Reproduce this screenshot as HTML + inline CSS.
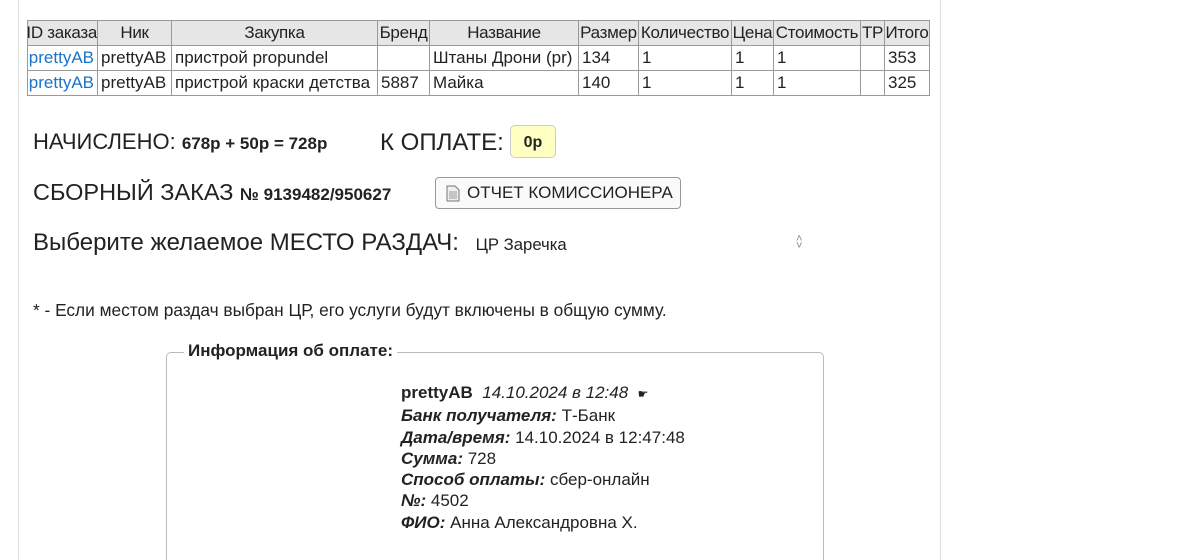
<!DOCTYPE html>
<html style="height:560px;overflow:hidden"><head><meta charset="utf-8"><style>
body{margin:0;width:1179px;height:560px;background:#fff;font-family:"Liberation Sans",Arial,sans-serif;color:#222;position:relative;overflow:hidden}
.lb{position:absolute;left:18px;top:0;width:1px;height:560px;background:#ddd}
.rb{position:absolute;left:940px;top:0;width:1px;height:560px;background:#ddd}
table{position:absolute;left:27px;top:20px;width:902px;border-collapse:collapse;font-size:17px;table-layout:fixed}
td,th{border:1px solid #999;padding:0 3px;height:24px;white-space:nowrap;overflow:hidden;font-weight:normal;text-align:left}
th{background:#e6e6e6;text-align:center;padding:0;letter-spacing:-0.3px}
.r{display:flex;justify-content:flex-end;overflow:hidden;width:100%}
.r>*{flex-shrink:0}
a{color:#1a73c8;text-decoration:none}
.t{position:absolute;white-space:nowrap}
.big{font-size:23.5px;color:#222}
.b{font-weight:bold;font-size:17px}
.pay{position:absolute;left:510px;top:125px;width:46px;height:33px;background:#ffffc4;border:1px solid #ccc;border-radius:5px;box-sizing:border-box;font-weight:bold;font-size:16px;text-align:center;line-height:33px}
.btn{position:absolute;left:435px;top:177px;width:246px;height:32px;border:1px solid #999;border-radius:4px;box-sizing:border-box;font-size:17px;line-height:30px;padding-left:31px;background:#fafafa;white-space:nowrap}
.fs{position:absolute;left:166px;top:352px;width:658px;height:208px;border:1px solid #bbb;border-bottom:none;border-radius:5px 5px 0 0;box-sizing:border-box}
.lg{position:absolute;left:184px;top:341px;background:#fff;padding:0 4px;font-weight:bold;font-size:17px}
.info{position:absolute;left:401px;top:382px;font-size:17px;line-height:21.3px}
.info i{font-weight:bold}
</style></head><body>
<div class="lb"></div><div class="rb"></div>
<table>
<colgroup><col style="width:70px"><col style="width:74px"><col style="width:206px"><col style="width:52px"><col style="width:149px"><col style="width:60px"><col style="width:93px"><col style="width:42px"><col style="width:87px"><col style="width:24px"><col style="width:45px"></colgroup>
<tr><th><div class="r"><span>ID заказа</span></div></th><th>Ник</th><th>Закупка</th><th>Бренд</th><th>Название</th><th>Размер</th><th>Количество</th><th>Цена</th><th>Стоимость</th><th>ТР</th><th>Итого</th></tr>
<tr><td style="padding:0 3px 0 0"><div class="r"><a>prettyAB</a></div></td><td>prettyAB</td><td>пристрой propundel</td><td></td><td>Штаны Дрони (pr)</td><td>134</td><td>1</td><td>1</td><td>1</td><td></td><td>353</td></tr>
<tr><td style="padding:0 3px 0 0"><div class="r"><a>prettyAB</a></div></td><td>prettyAB</td><td>пристрой краски детства</td><td>5887</td><td>Майка</td><td>140</td><td>1</td><td>1</td><td>1</td><td></td><td>325</td></tr>
</table>
<div class="t big" style="left:33px;top:129px;font-size:22px">НАЧИСЛЕНО: <span class="b">678р + 50р = 728р</span></div>
<div class="t big" style="left:380px;top:129px;font-size:24px">К ОПЛАТЕ:</div>
<div class="pay">0р</div>
<div class="t big" style="left:33px;top:179px">СБОРНЫЙ ЗАКАЗ <span class="b">№ 9139482/950627</span></div>
<div class="btn"><svg style="position:absolute;left:10px;top:7px" width="14" height="17" viewBox="0 0 14 17"><path d="M1 1h8l4 4v11H1z" fill="#eee" stroke="#777"/><path d="M3 7h8M3 9h8M3 11h8M3 13h8" stroke="#999"/></svg>ОТЧЕТ КОМИССИОНЕРА</div>
<div class="t big" style="left:33px;top:229px;font-size:24px">Выберите желаемое МЕСТО РАЗДАЧ: <span style="font-size:16.7px;margin-left:10px">ЦР Заречка</span></div>
<div class="t" style="left:796px;top:236px;font-size:11px;color:#888;line-height:7px">˄<br>˅</div>
<div class="t" style="left:33px;top:300px;font-size:17.3px">* - Если местом раздач выбран ЦР, его услуги будут включены в общую сумму.</div>
<div class="fs"></div>
<div class="lg">Информация об оплате:</div>
<div class="info">
<b>prettyAB</b> &nbsp;<i style="font-weight:normal">14.10.2024 в 12:48</i> &nbsp;<span style="font-size:12px">☛</span><br>
<i>Банк получателя:</i> Т-Банк<br>
<i>Дата/время:</i> 14.10.2024 в 12:47:48<br>
<i>Сумма:</i> 728<br>
<i>Способ оплаты:</i> сбер-онлайн<br>
<i>№:</i> 4502<br>
<i>ФИО:</i> Анна Александровна Х.
</div>
</body></html>
